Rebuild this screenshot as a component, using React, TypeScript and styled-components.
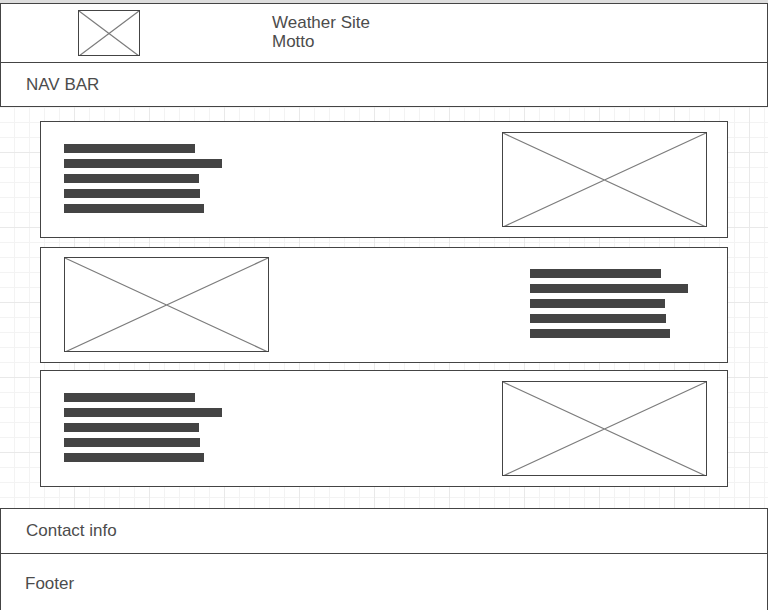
import React from "react";
import styled, { createGlobalStyle } from "styled-components";

const ink = "#444444";
const textColor = "#4c4c4c";
const minor = "#f3f3f3";
const major = "#e9e9e9";

const GlobalStyle = createGlobalStyle`
  * {
    box-sizing: border-box;
  }
  body {
    margin: 0;
    background: #ffffff;
    color: ${textColor};
    font-family: "Liberation Sans", Arial, sans-serif;
    font-size: 17px;
    line-height: 19px;
  }
`;

const Page = styled.div`
  display: flex;
  flex-direction: column;
  min-height: 100vh;
  border-top: 3px solid #dddddd;
`;

const Band = styled.div`
  display: flex;
  align-items: center;
  padding: 12px 25px;
  background: #ffffff;
  border: 1px solid ${ink};
  border-bottom-width: 0;
`;

const Header = styled(Band).attrs({ as: "header" })`
  gap: 132px;
  padding: 6px 77px;
`;

const NavBar = styled(Band).attrs({ as: "nav" })`
  border-bottom-width: 1px;
`;

const Contact = styled(Band).attrs({ as: "section" })`
  padding: 12px 25px 13px;
`;

const Footer = styled(Band).attrs({ as: "footer" })`
  flex: 1;
  align-items: flex-start;
  padding: 20px 24px 17px;
`;

const Titles = styled.div`
  display: flex;
  flex-direction: column;
  padding-bottom: 2px;
`;

const SiteName = styled.h1`
  margin: 0;
  font: inherit;
`;

const Line = styled.p`
  margin: 0;
`;

const Main = styled.main`
  display: flex;
  flex-direction: column;
  padding: 14px 40px 21px;
  background-color: #ffffff;
  background-image:
    linear-gradient(to right, ${major} 1px, transparent 1px),
    linear-gradient(to bottom, ${major} 1px, transparent 1px),
    linear-gradient(to right, ${minor} 1px, transparent 1px),
    linear-gradient(to bottom, ${minor} 1px, transparent 1px);
  background-size: 75px 75px, 75px 75px, 15px 15px, 15px 15px;
  background-position: 74px 0, 0 45px, 14px 0, 0 0;
`;

const Card = styled.article<{ $reversed: boolean; $gap: number; $top: number }>`
  display: flex;
  flex-direction: ${(p) => (p.$reversed ? "row-reverse" : "row")};
  align-items: center;
  justify-content: space-between;
  margin-top: ${(p) => p.$gap}px;
  padding: ${(p) => p.$top}px 20px 10px 23px;
  background: #ffffff;
  border: 1px solid ${ink};
`;

const TextBlock = styled.div`
  display: flex;
  flex-direction: column;
  gap: 6px;
  width: 177px;
  padding-bottom: 2px;
`;

const TextBar = styled.div<{ $width: number }>`
  width: ${(p) => p.$width}px;
  height: 9px;
  background: ${ink};
`;

const Picture = styled.svg`
  display: block;
  flex: none;
`;

function Placeholder({ width, height, label }: { width: number; height: number; label: string }) {
  return (
    <Picture width={width} height={height} viewBox={`0 0 ${width} ${height}`} role="img" aria-label={label}>
      <path
        d={`M1 1L${width - 1} ${height}M1 ${height}L${width - 1} 1`}
        stroke="#7c7c7c"
        strokeWidth="1.2"
        fill="none"
      />
      <rect x="0.5" y="0.5" width={width - 1} height={height - 1} fill="none" stroke={ink} />
    </Picture>
  );
}

const barWidths = [131, 158, 135, 136, 140];

const cards = [
  { id: "first", reversed: false, gap: 0, top: 10 },
  { id: "second", reversed: true, gap: 9, top: 9 },
  { id: "third", reversed: false, gap: 7, top: 10 },
];

export default function App() {
  return (
    <>
      <GlobalStyle />
      <Page>
        <Header>
          <Placeholder width={62} height={46} label="Logo" />
          <Titles>
            <SiteName>Weather Site</SiteName>
            <Line>Motto</Line>
          </Titles>
        </Header>
        <NavBar>NAV BAR</NavBar>
        <Main>
          {cards.map((card) => (
            <Card key={card.id} $reversed={card.reversed} $gap={card.gap} $top={card.top}>
              <TextBlock>
                {barWidths.map((width) => (
                  <TextBar key={width} $width={width} />
                ))}
              </TextBlock>
              <Placeholder width={205} height={95} label="Picture" />
            </Card>
          ))}
        </Main>
        <Contact>Contact info</Contact>
        <Footer>Footer</Footer>
      </Page>
    </>
  );
}
